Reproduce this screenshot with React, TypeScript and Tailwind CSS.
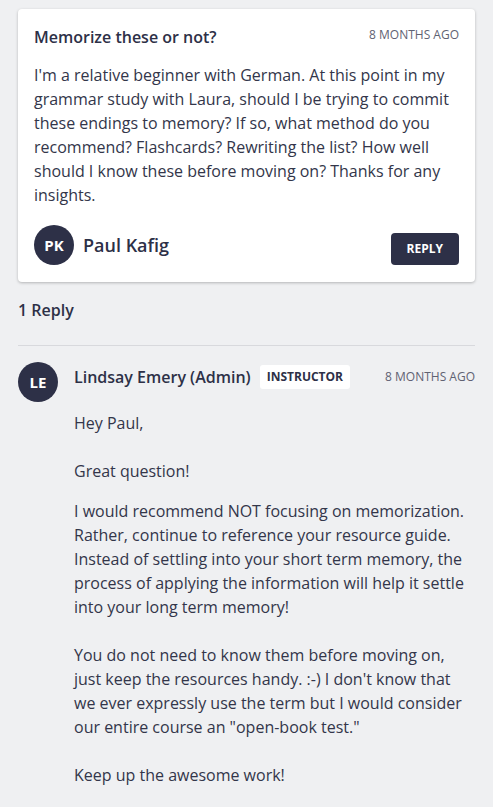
const question =
  "I'm a relative beginner with German. At this point in my grammar study with Laura, should I be trying to commit these endings to memory? If so, what method do you recommend? Flashcards? Rewriting the list? How well should I know these before moving on? Thanks for any insights.";

const greeting = `Hey Paul,

Great question!`;

const answer = `I would recommend NOT focusing on memorization. Rather, continue to reference your resource guide. Instead of settling into your short term memory, the process of applying the information will help it settle into your long term memory!

You do not need to know them before moving on, just keep the resources handy. :-) I don't know that we ever expressly use the term but I would consider our entire course an "open-book test."

Keep up the awesome work!`;

const Avatar = ({ initials }: { initials: string }) => (
  <div className="w-10 h-10 rounded-full bg-[#2d3047] text-white flex items-center justify-center text-[15px] font-bold shrink-0">
    {initials}
  </div>
);

export default function App() {
  return (
    <div
      className="min-h-[807px] bg-[#eff0f2] px-[18px] pt-[9px] pb-6 text-[#2d3047]"
      style={{ fontFamily: '"Open Sans", sans-serif' }}
    >
      <div className="bg-white rounded-[4px] shadow-[0_1px_3px_rgba(0,0,0,0.25)] px-4 pt-[16px] pb-[17px]">
        <div className="flex items-start justify-between">
          <h2 className="text-[16px] font-semibold leading-6">Memorize these or not?</h2>
          <span className="text-[12px] text-[#5f6272] uppercase leading-5">8 months ago</span>
        </div>
        <p className="mt-[14px] text-[16px] leading-6 text-[#33364a]">{question}</p>
        <div className="mt-[18px] flex items-center justify-between">
          <div className="flex items-center gap-[9px]">
            <Avatar initials="PK" />
            <span className="text-[18px] font-semibold">Paul Kafig</span>
          </div>
          <button className="bg-[#2d3047] text-white text-[12px] font-bold uppercase rounded-[4px] px-4 h-8 mt-2">
            Reply
          </button>
        </div>
      </div>

      <div className="pt-[16px] pb-[23px] text-[16px] font-semibold leading-6">1 Reply</div>
      <div className="border-t border-[#d8d9dd]" />

      <div className="flex gap-4 pt-[16px]">
        <Avatar initials="LE" />
        <div className="flex-1">
          <div className="flex items-center justify-between h-[28px] mt-[1px]">
            <div className="flex items-center gap-[9px]">
              <span className="text-[16px] font-semibold">Lindsay Emery (Admin)</span>
              <span className="bg-white rounded-[3px] px-[7px] py-[3px] text-[12px] font-bold">INSTRUCTOR</span>
            </div>
            <span className="text-[12px] text-[#5f6272] uppercase">8 months ago</span>
          </div>
          <div className="mt-[20px] text-[16px] leading-6 text-[#33364a] whitespace-pre-line">
            <p>{greeting}</p>
            <p className="mt-4">{answer}</p>
          </div>
        </div>
      </div>
    </div>
  );
}
